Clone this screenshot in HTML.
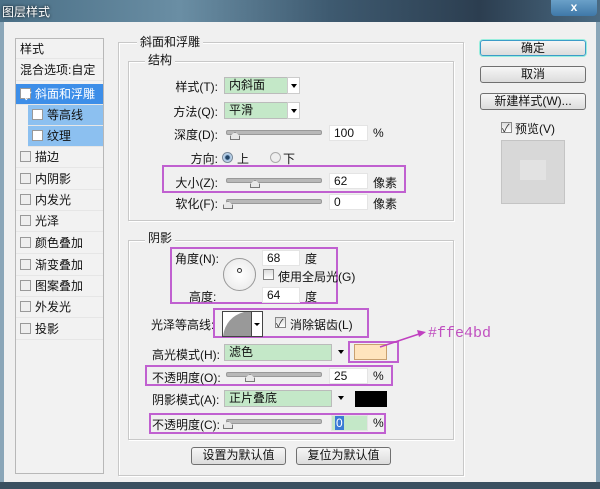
<!DOCTYPE html>
<html><head><meta charset="utf-8"><style>
*{margin:0;padding:0;box-sizing:border-box}
body{width:600px;height:489px;overflow:hidden;background:#f0f0f0;font-family:"Liberation Sans","Noto Sans CJK SC","WenQuanYi Zen Hei",sans-serif;font-size:12px;color:#111;position:relative}
.a{position:absolute;white-space:nowrap}
.title{left:0;top:0;width:600px;height:22px;background:linear-gradient(90deg,#4a6f86,#6a8ea4 30%,#3e5a70 55%,#2c3e50 80%,#4a6a82)}
.gb{position:absolute;border:1px solid #c8c8c8;box-shadow:inset 1px 1px 0 #fff,1px 1px 0 #fff}
.lbl{position:absolute;background:#f0f0f0;padding:0 3px;line-height:14px}
.r{text-align:right;width:90px}
.dd{position:absolute;height:17px;background:#c4e8c8;border:1px solid #bbb;padding-left:4px;line-height:15px}
.arr{position:absolute;width:13px;height:17px;background:#fff;border:1px solid #ccc}
.arr:after{content:"";position:absolute;left:3px;top:6px;border:3px solid transparent;border-top:4px solid #000}
.trk{position:absolute;height:5px;background:#b8b8b8;border:1px solid #999;border-radius:2px}
.th{position:absolute;width:10px;height:8px;border:1px solid #777;background:#e8e8e8;clip-path:polygon(50% 0,100% 50%,100% 100%,0 100%,0 50%)}
.in{position:absolute;height:16px;background:#fff;border:1px solid #e4e4e4;padding-left:4px;line-height:15px}
.cb{position:absolute;width:11px;height:11px;border:1px solid #888;background:linear-gradient(#ddd,#fff)}
.ck:after{content:"✓";position:absolute;left:0;top:-3px;font-size:11px;color:#333}
.pb{position:absolute;border:2px solid #c060d0}
.btn{position:absolute;border:1px solid #707070;border-radius:3px;background:linear-gradient(#f6f6f6,#dcdcdc);text-align:center;line-height:15px}
.row{position:absolute;left:16px;width:87px;height:21px;line-height:21px;padding-left:4px;border-bottom:1px solid #e6e6e6}
.rcb{display:inline-block;width:11px;height:11px;border:1px solid #999;background:#eee;vertical-align:-1px;margin-right:4px}
</style></head><body>
<div class="a title"></div>
<div class="a" style="left:2px;top:3px;color:#fff;font-size:12px;text-shadow:0 0 3px #000">图层样式</div>
<div class="a" style="left:551px;top:0;width:46px;height:16px;background:#c8403a;border-radius:0 0 4px 4px;color:#fff;text-align:center;font-weight:bold;line-height:14px;background:linear-gradient(#6aa0c8,#3f78a8)">x</div>
<div class="a" style="left:0;top:22px;width:4px;height:460px;background:#8aa6b8"></div>
<div class="a" style="left:596px;top:22px;width:4px;height:460px;background:#8aa6b8"></div>
<div class="a" style="left:0;top:482px;width:600px;height:7px;background:#3a5060"></div>

<!-- left panel -->
<div class="a" style="left:15px;top:38px;width:89px;height:436px;border:1px solid #b8b8b8;background:#f2f2f2"></div>
<div class="row" style="top:39px;height:20px">样式</div>
<div class="row" style="top:60px">混合选项:自定</div>
<div class="row" style="top:84px;background:#3d8ee8;color:#fff"><span class="rcb" style="background:#fff;position:relative"></span>斜面和浮雕</div>
<div class="row" style="top:105px;left:28px;width:75px;background:#8cc0f0"><span class="rcb" style="background:#fff"></span>等高线</div>
<div class="row" style="top:126px;left:28px;width:75px;background:#8cc0f0"><span class="rcb" style="background:#fff"></span>纹理</div>
<div class="row" style="top:147px"><span class="rcb"></span>描边</div>
<div class="row" style="top:169px"><span class="rcb"></span>内阴影</div>
<div class="row" style="top:190px"><span class="rcb"></span>内发光</div>
<div class="row" style="top:211px"><span class="rcb"></span>光泽</div>
<div class="row" style="top:233px"><span class="rcb"></span>颜色叠加</div>
<div class="row" style="top:255px"><span class="rcb"></span>渐变叠加</div>
<div class="row" style="top:276px"><span class="rcb"></span>图案叠加</div>
<div class="row" style="top:297px"><span class="rcb"></span>外发光</div>
<div class="row" style="top:319px"><span class="rcb"></span>投影</div>
<div class="a" style="left:24px;top:88px;color:#fff;font-size:11px">✓</div>

<!-- main group -->
<div class="gb" style="left:118px;top:42px;width:346px;height:434px"></div>
<div class="lbl" style="left:137px;top:35px">斜面和浮雕</div>
<div class="gb" style="left:128px;top:61px;width:326px;height:160px"></div>
<div class="lbl" style="left:145px;top:53px">结构</div>

<div class="a r" style="left:128px;top:78px">样式(T):</div>
<div class="dd" style="left:224px;top:77px;width:64px">内斜面</div><div class="arr" style="left:287px;top:77px"></div>
<div class="a r" style="left:128px;top:103px">方法(Q):</div>
<div class="dd" style="left:224px;top:102px;width:64px">平滑</div><div class="arr" style="left:287px;top:102px"></div>
<div class="a r" style="left:128px;top:126px">深度(D):</div>
<div class="trk" style="left:226px;top:130px;width:96px"></div><div class="th" style="left:230px;top:132px"></div>
<div class="in" style="left:329px;top:125px;width:39px">100</div><div class="a" style="left:373px;top:126px">%</div>
<div class="a r" style="left:128px;top:150px">方向:</div>
<div class="a" style="left:222px;top:152px;width:11px;height:11px;border-radius:50%;border:1px solid #789;background:radial-gradient(#246 30%,#9bd 40%,#fff)"></div>
<div class="a" style="left:237px;top:150px">上</div>
<div class="a" style="left:270px;top:152px;width:11px;height:11px;border-radius:50%;border:1px solid #aaa;background:#eee"></div>
<div class="a" style="left:283px;top:150px">下</div>
<div class="pb" style="left:162px;top:165px;width:244px;height:28px"></div>
<div class="a r" style="left:128px;top:174px">大小(Z):</div>
<div class="trk" style="left:226px;top:178px;width:96px"></div><div class="th" style="left:250px;top:180px"></div>
<div class="in" style="left:329px;top:173px;width:39px">62</div><div class="a" style="left:373px;top:174px">像素</div>
<div class="a r" style="left:128px;top:195px">软化(F):</div>
<div class="trk" style="left:226px;top:199px;width:96px"></div><div class="th" style="left:223px;top:201px"></div>
<div class="in" style="left:329px;top:194px;width:39px">0</div><div class="a" style="left:373px;top:195px">像素</div>

<div class="gb" style="left:128px;top:240px;width:326px;height:200px"></div>
<div class="lbl" style="left:145px;top:231px">阴影</div>
<div class="pb" style="left:170px;top:247px;width:168px;height:57px"></div>
<div class="a" style="left:175px;top:250px">角度(N):</div>
<div class="in" style="left:262px;top:250px;width:38px">68</div><div class="a" style="left:305px;top:250px">度</div>
<div class="a" style="left:223px;top:258px;width:33px;height:33px;border-radius:50%;border:1px solid #999;background:radial-gradient(#fff,#e6e6e6)"></div>
<div class="a" style="left:237px;top:268px;width:5px;height:5px;border-radius:50%;border:1px solid #333"></div>
<div class="cb" style="left:263px;top:269px"></div><div class="a" style="left:278px;top:268px">使用全局光(G)</div>
<div class="a" style="left:189px;top:288px">高度:</div>
<div class="in" style="left:262px;top:287px;width:38px">64</div><div class="a" style="left:305px;top:288px">度</div>

<div class="a" style="left:151px;top:316px">光泽等高线:</div>
<div class="pb" style="left:213px;top:308px;width:156px;height:30px"></div>
<svg class="a" style="left:222px;top:311px" width="42" height="26"><rect x="0.5" y="0.5" width="29" height="25" fill="#fff" stroke="#444"/><path d="M1 25 Q4 6 22 1 L29 1 L29 25Z" fill="#999"/><rect x="29.5" y="0.5" width="11" height="25" fill="#fff" stroke="#444"/><path d="M32 12 L38 12 L35 15Z" fill="#000"/></svg>
<div class="cb ck" style="left:275px;top:317px"></div><div class="a" style="left:290px;top:316px">消除锯齿(L)</div>

<div class="a" style="left:152px;top:346px">高光模式(H):</div>
<div class="dd" style="left:224px;top:344px;width:108px">滤色</div><div class="arr" style="left:335px;top:344px;border:none;background:none"></div>
<div class="pb" style="left:348px;top:341px;width:51px;height:22px"></div>
<div class="a" style="left:354px;top:344px;width:33px;height:16px;background:#ffe4bd;border:1px solid #c8a070"></div>
<svg class="a" style="left:378px;top:325px" width="50" height="25"><line x1="2" y1="22" x2="44" y2="8" stroke="#c040c0" stroke-width="1.5"/><path d="M39 5 L48 7 L41 12Z" fill="#c040c0"/></svg>
<div class="a" style="left:428px;top:325px;color:#c050c0;font-family:'Liberation Mono',monospace;font-size:15px">#ffe4bd</div>

<div class="pb" style="left:145px;top:365px;width:248px;height:21px"></div>
<div class="a" style="left:152px;top:369px">不透明度(O):</div>
<div class="trk" style="left:226px;top:372px;width:96px"></div><div class="th" style="left:245px;top:374px"></div>
<div class="in" style="left:329px;top:368px;width:39px">25</div><div class="a" style="left:373px;top:369px">%</div>

<div class="a" style="left:152px;top:391px">阴影模式(A):</div>
<div class="dd" style="left:224px;top:390px;width:108px">正片叠底</div><div class="arr" style="left:335px;top:390px;border:none;background:none"></div>
<div class="a" style="left:355px;top:391px;width:32px;height:16px;background:#000"></div>

<div class="pb" style="left:149px;top:413px;width:237px;height:21px"></div>
<div class="a" style="left:152px;top:416px">不透明度(C):</div>
<div class="trk" style="left:226px;top:419px;width:96px"></div><div class="th" style="left:223px;top:421px"></div>
<div class="in" style="left:331px;top:415px;width:37px;background:#c4e8c8;padding-left:3px"><span style="background:#3a7bd5;color:#fff;padding:0 1px">0</span></div><div class="a" style="left:373px;top:416px">%</div>

<div class="btn" style="left:191px;top:447px;width:95px;height:18px">设置为默认值</div>
<div class="btn" style="left:296px;top:447px;width:95px;height:18px">复位为默认值</div>

<!-- right -->
<div class="btn" style="left:480px;top:40px;width:106px;height:16px;border-color:#3c9cc8;box-shadow:0 0 0 1px #9ed">确定</div>
<div class="btn" style="left:480px;top:66px;width:106px;height:17px">取消</div>
<div class="btn" style="left:480px;top:93px;width:106px;height:17px">新建样式(W)...</div>
<div class="cb ck" style="left:501px;top:122px"></div><div class="a" style="left:515px;top:120px">预览(V)</div>
<div class="a" style="left:501px;top:140px;width:64px;height:64px;background:#d8d8d8;border:1px solid #c4c4c4"></div>
<div class="a" style="left:520px;top:160px;width:26px;height:20px;background:#e2e2e2"></div>
</body></html>
